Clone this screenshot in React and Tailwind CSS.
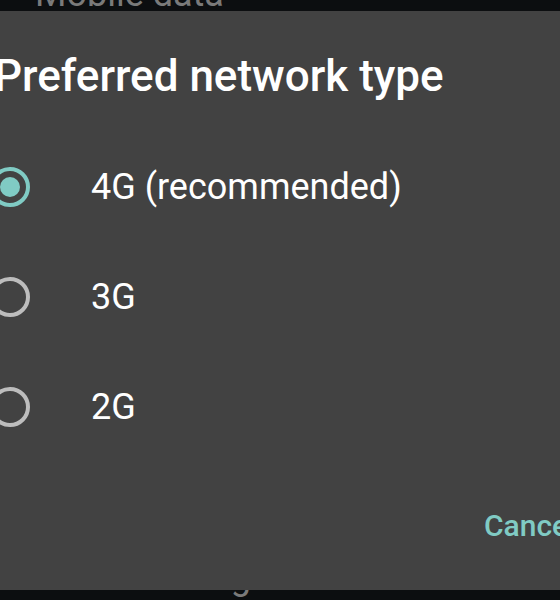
import React, { useState } from 'react'

const options = [
    { id: '4g', label: '4G (recommended)' },
    { id: '3g', label: '3G' },
    { id: '2g', label: '2G' },
]

const Radio = ({ checked }) => (
    <div className={`w-[40px] h-[40px] rounded-full border-[4px] flex items-center justify-center shrink-0 ${checked ? 'border-[#80cbc4]' : 'border-[#bdbdbd]'}`}>
        {checked && <div className="w-[20px] h-[20px] rounded-full bg-[#80cbc4]" />}
    </div>
)

const App = () => {
    const [selected, setSelected] = useState('4g')

    return (
        <div className="relative w-[560px] h-[600px] overflow-hidden bg-[#0c0e10]" style={{ fontFamily: 'Roboto, "Noto Sans", sans-serif' }}>
            {/* settings list behind the dialog */}
            <div className="flex flex-col h-full justify-between pl-[35px] text-[36px] text-[#7a7a7a] leading-none">
                <div className="-mt-[24px]">Mobile data</div>
                <div className="mb-[5px]">Data roaming</div>
            </div>

            {/* dialog */}
            <div className="absolute top-[11px] bottom-[10px] left-[-55px] right-0 bg-[#424242] flex flex-col">
                <h1 className="pl-[49px] pt-[43px] text-[44px] leading-[44px] font-medium text-white whitespace-nowrap">
                    Preferred network type
                </h1>

                <div className="mt-[34px] flex flex-col">
                    {options.map(opt => (
                        <button
                            key={opt.id}
                            onClick={() => setSelected(opt.id)}
                            className="h-[110px] flex items-center pl-[45px] text-left"
                        >
                            <Radio checked={selected === opt.id} />
                            <span className="ml-[61px] text-[36px] text-white leading-normal">{opt.label}</span>
                        </button>
                    ))}
                </div>

                <div className="flex-1" />

                <div className="pl-[539px] pb-[47px]">
                    <button className="text-[30px] leading-[30px] font-medium text-[#80cbc4] whitespace-nowrap">
                        Cancel
                    </button>
                </div>
            </div>
        </div>
    )
}

export default App
